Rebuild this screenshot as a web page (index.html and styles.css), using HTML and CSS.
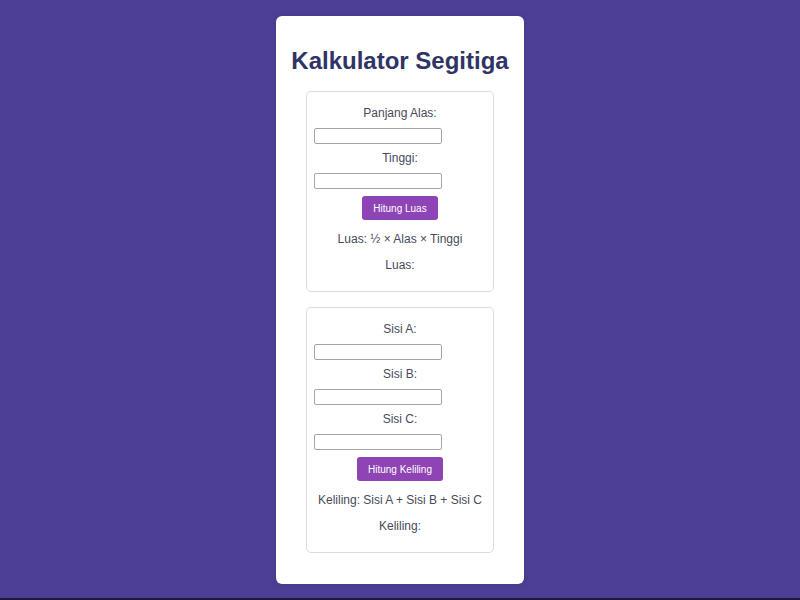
FILE: index.html
```html
<!DOCTYPE html>
<html lang="id">
<head>
<meta charset="utf-8">
<title>Kalkulator Segitiga</title>
<link rel="stylesheet" href="styles.css">
</head>
<body>
<div class="card">
  <h1 class="title">Kalkulator Segitiga</h1>
  <div class="box">
    <label class="lbl">Panjang Alas:</label>
    <input class="field" type="text">
    <label class="lbl">Tinggi:</label>
    <input class="field" type="text">
    <button class="btn">Hitung Luas</button>
    <p class="txt">Luas: ½ × Alas × Tinggi</p>
    <p class="txt">Luas:</p>
  </div>
  <div class="box">
    <label class="lbl">Sisi A:</label>
    <input class="field" type="text">
    <label class="lbl">Sisi B:</label>
    <input class="field" type="text">
    <label class="lbl">Sisi C:</label>
    <input class="field" type="text">
    <button class="btn">Hitung Keliling</button>
    <p class="txt">Keliling: Sisi A + Sisi B + Sisi C</p>
    <p class="txt">Keliling:</p>
  </div>
</div>
</body>
</html>
```
FILE: styles.css
```css
html, body {
  margin: 0;
  padding: 0;
}
body {
  background: #4e3f96;
  min-height: 100vh;
  display: flex;
  align-items: center;
  justify-content: center;
  font-family: "Liberation Sans", Arial, sans-serif;
  box-shadow: inset 0 -2px 0 #1e1a3a;
}
.card {
  background: #fff;
  border-radius: 6px;
  padding: 15px 15px 16px;
  text-align: center;
  box-shadow: 0 0 6px rgba(0,0,0,0.15);
}
.title {
  font-size: 24px;
  line-height: 28px;
  font-weight: bold;
  color: #2f3466;
  margin: 16px 0;
  white-space: nowrap;
}
.box {
  margin: 15px;
  padding: 7px;
  border: 1px solid #dcdcdc;
  border-radius: 5px;
  text-align: center;
}
.lbl {
  display: block;
  font-size: 12px;
  line-height: 14px;
  color: #474a5c;
  margin: 7px 0 8px;
}
.field {
  display: block;
  box-sizing: border-box;
  width: 128px;
  height: 16px;
  margin: 0;
  padding: 0 3px;
  border: 1px solid #a6a6a6;
  border-radius: 2px;
  background: #fff;
}
.btn {
  display: inline-block;
  margin-top: 7px;
  height: 24px;
  padding: 0 11.5px;
  border: none;
  border-radius: 3px;
  background: #8e44b5;
  color: #fff;
  font-family: "Liberation Sans", Arial, sans-serif;
  font-size: 10px;
  vertical-align: top;
}
.txt {
  font-size: 12px;
  line-height: 14px;
  color: #474a5c;
  margin: 12px 0;
}
```
